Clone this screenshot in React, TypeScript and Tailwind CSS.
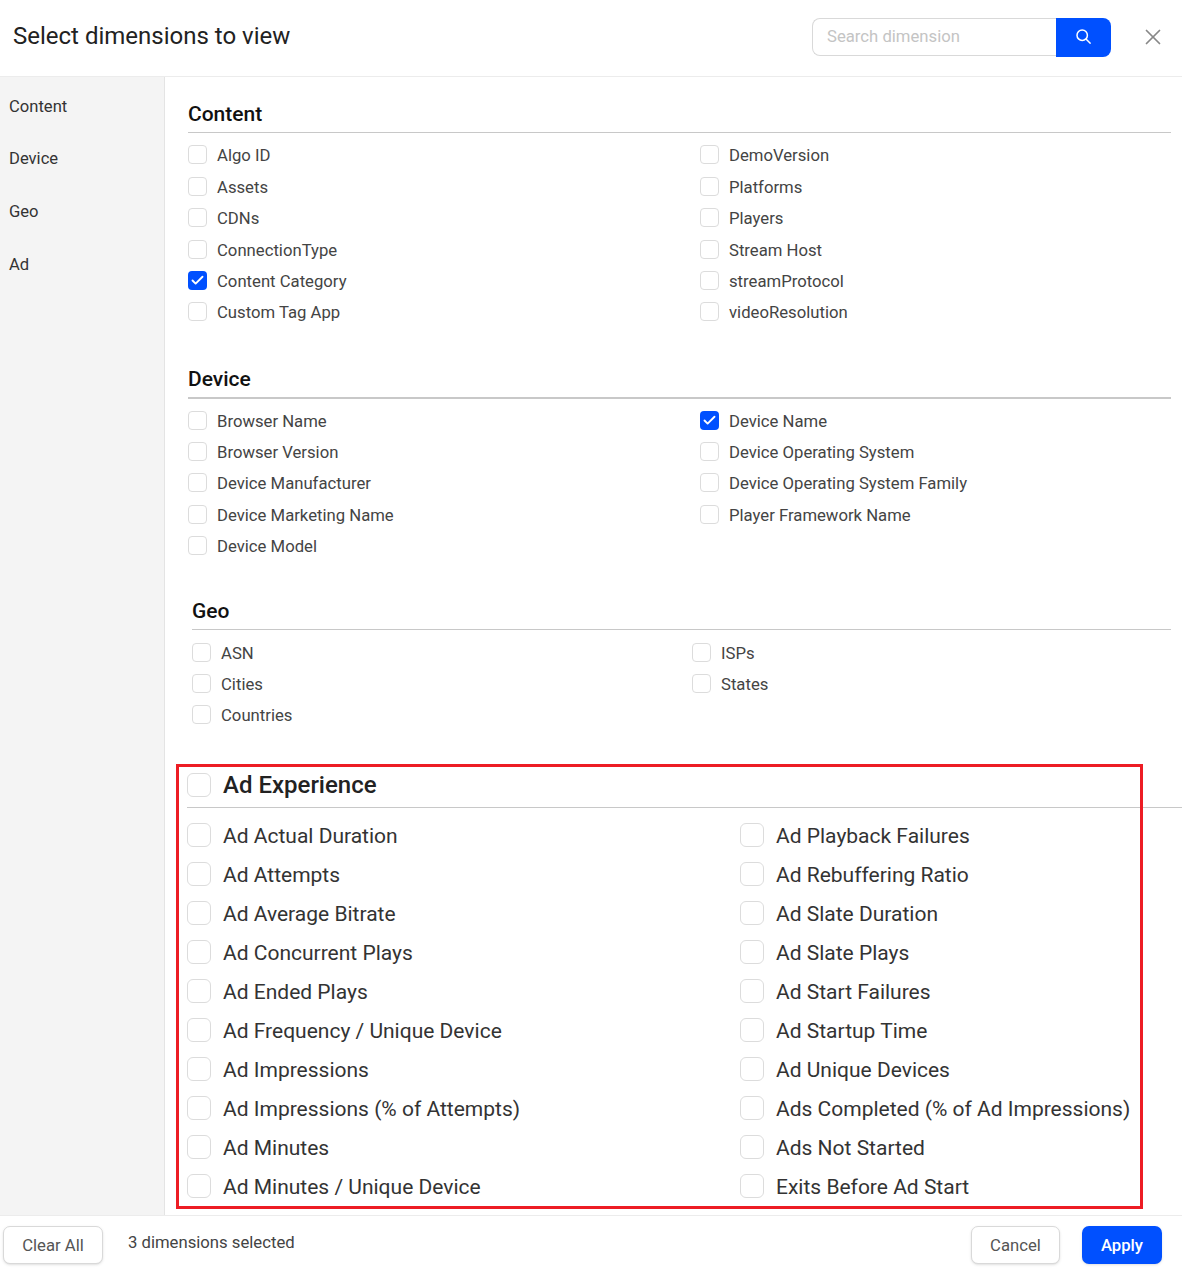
import { X, Check } from "lucide-react";

const content = [
  ["Algo ID", "Assets", "CDNs", "ConnectionType", "Content Category", "Custom Tag App"],
  ["DemoVersion", "Platforms", "Players", "Stream Host", "streamProtocol", "videoResolution"],
];
const device = [
  ["Browser Name", "Browser Version", "Device Manufacturer", "Device Marketing Name", "Device Model"],
  ["Device Name", "Device Operating System", "Device Operating System Family", "Player Framework Name"],
];
const geo = [
  ["ASN", "Cities", "Countries"],
  ["ISPs", "States"],
];
const ads = [
  [
    "Ad Actual Duration",
    "Ad Attempts",
    "Ad Average Bitrate",
    "Ad Concurrent Plays",
    "Ad Ended Plays",
    "Ad Frequency / Unique Device",
    "Ad Impressions",
    "Ad Impressions (% of Attempts)",
    "Ad Minutes",
    "Ad Minutes / Unique Device",
  ],
  [
    "Ad Playback Failures",
    "Ad Rebuffering Ratio",
    "Ad Slate Duration",
    "Ad Slate Plays",
    "Ad Start Failures",
    "Ad Startup Time",
    "Ad Unique Devices",
    "Ads Completed (% of Ad Impressions)",
    "Ads Not Started",
    "Exits Before Ad Start",
  ],
];
const checked = ["Content Category", "Device Name"];

const Item = ({ label }: { label: string }) => {
  const on = checked.includes(label);
  return (
    <div className="flex h-[31.4px] items-center gap-[10px] text-[16.7px] text-[#444]">
      {on ? (
        <span className="-mt-[2px] flex h-[19px] w-[19px] items-center justify-center rounded-[4px] bg-[#0050ff]">
          <Check size={15} strokeWidth={3} className="text-white" />
        </span>
      ) : (
        <span className="-mt-[2px] h-[19px] w-[19px] rounded-[4px] border border-[#dcdcdc] bg-white" />
      )}
      {label}
    </div>
  );
};

const AdItem = ({ label }: { label: string }) => (
  <div className="flex h-[39px] items-center gap-[12px] text-[21px] text-[#333]">
    <span className="-mt-[3px] h-[24px] w-[24px] rounded-[6px] border border-[#dcdcdc] bg-white" />
    {label}
  </div>
);

export default function App() {
  return (
    <div className="flex h-[1278px] w-[1182px] flex-col bg-white font-['Roboto',sans-serif]">
      <div className="flex h-[77px] shrink-0 items-start border-b border-[#ececec] pl-[13px]">
        <h1 className="mt-[20px] text-[24px] leading-[32px] text-[#222]">Select dimensions to view</h1>
        <div className="mt-[18px] ml-auto flex h-[39px] w-[299px] items-start">
          <div className="flex h-[38px] w-[244px] items-center rounded-l-[8px] border border-r-0 border-[#d9d9d9] pl-[14px] text-[16.7px] text-[#c4c4c4]">
            Search dimension
          </div>
          <div className="flex h-[39px] w-[55px] items-center justify-center rounded-r-[8px] bg-[#0050ff] pb-[2px]">
            <svg width="15" height="15" viewBox="0 0 15 15" fill="none" stroke="white">
              <circle cx="6.2" cy="6.2" r="5.2" strokeWidth="1.5" />
              <path d="M10 10L14.6 14.6" strokeWidth="1.5" />
            </svg>
          </div>
        </div>
        <X size={26} strokeWidth={1.6} className="mt-[24px] mr-[16px] ml-[29px] text-[#888]" />
      </div>

      <div className="flex min-h-0 flex-1">
        <aside className="w-[165px] shrink-0 border-r border-[#e4e4e4] bg-[#f4f4f4] pt-[16.6px] pl-[9px] text-[16.6px] text-[#333]">
          <div className="h-[52.7px] leading-[26px]">Content</div>
          <div className="h-[52.7px] leading-[26px]">Device</div>
          <div className="h-[52.7px] leading-[26px]">Geo</div>
          <div className="h-[52.7px] leading-[26px]">Ad</div>
        </aside>

        <main className="relative min-w-0 flex-1">
          <section className="mt-[22px] ml-[23px] mr-[11px]">
            <h2 className="h-[34px] border-b border-[#c8c8c8] pt-[1px] text-[21px] leading-[28px] font-medium text-[#111]">Content</h2>
            <div className="mt-[7.2px] flex">
              <div className="w-[512px]">
                {content[0].map((l) => <Item key={l} label={l} />)}
              </div>
              <div>
                {content[1].map((l) => <Item key={l} label={l} />)}
              </div>
            </div>
          </section>

          <section className="mt-[35.8px] ml-[23px] mr-[11px]">
            <h2 className="h-[35px] border-b-2 border-[#c8c8c8] pt-[1px] text-[21px] leading-[28px] font-medium text-[#111]">Device</h2>
            <div className="mt-[6.2px] flex">
              <div className="w-[512px]">
                {device[0].map((l) => <Item key={l} label={l} />)}
              </div>
              <div>
                {device[1].map((l) => <Item key={l} label={l} />)}
              </div>
            </div>
          </section>

          <section className="mt-[33.8px] ml-[27px] mr-[11px]">
            <h2 className="h-[34px] border-b border-[#c8c8c8] pt-[1px] text-[21px] leading-[28px] font-medium text-[#111]">Geo</h2>
            <div className="mt-[7.2px] flex">
              <div className="w-[500px]">
                {geo[0].map((l) => <Item key={l} label={l} />)}
              </div>
              <div>
                {geo[1].map((l) => <Item key={l} label={l} />)}
              </div>
            </div>
          </section>

          <section className="mt-[37.8px]">
            <div className="ml-[22px] flex h-[39px] items-start gap-[12px] border-b border-[#c8c8c8] text-[24px] leading-[32px] font-medium text-[#222]">
              <span className="mt-[4px] h-[24px] w-[24px] rounded-[6px] border border-[#dcdcdc] bg-white" />
              Ad Experience
            </div>
            <div className="mt-[9px] flex pl-[22px]">
              <div className="w-[553px]">
                {ads[0].map((l) => <AdItem key={l} label={l} />)}
              </div>
              <div>
                {ads[1].map((l) => <AdItem key={l} label={l} />)}
              </div>
            </div>
          </section>

          {/* red annotation over the ad section */}
          <div className="pointer-events-none absolute top-[687px] left-[11px] h-[445px] w-[967px] border-[3px] border-[#ed1c24]" />
        </main>
      </div>

      <div className="flex h-[63px] shrink-0 items-start border-t border-[#ececec] pt-[10px] pl-[3px]">
        <button className="h-[38px] w-[100px] rounded-[7px] border border-[#d9d9d9] bg-white pt-[1px] text-[16.7px] text-[#555] shadow-sm">Clear All</button>
        <span className="ml-[25px] pt-[1px] text-[16.7px] leading-[32px] text-[#444]">3 dimensions selected</span>
        <button className="ml-auto h-[38px] w-[89px] rounded-[7px] border border-[#d9d9d9] bg-white pt-[1px] text-[16.7px] text-[#555] shadow-sm">Cancel</button>
        <button className="mr-[20px] ml-[22px] h-[38px] w-[80px] rounded-[7px] bg-[#0050ff] pt-[1px] text-[16.7px] font-medium text-white shadow-sm">Apply</button>
      </div>
    </div>
  );
}
